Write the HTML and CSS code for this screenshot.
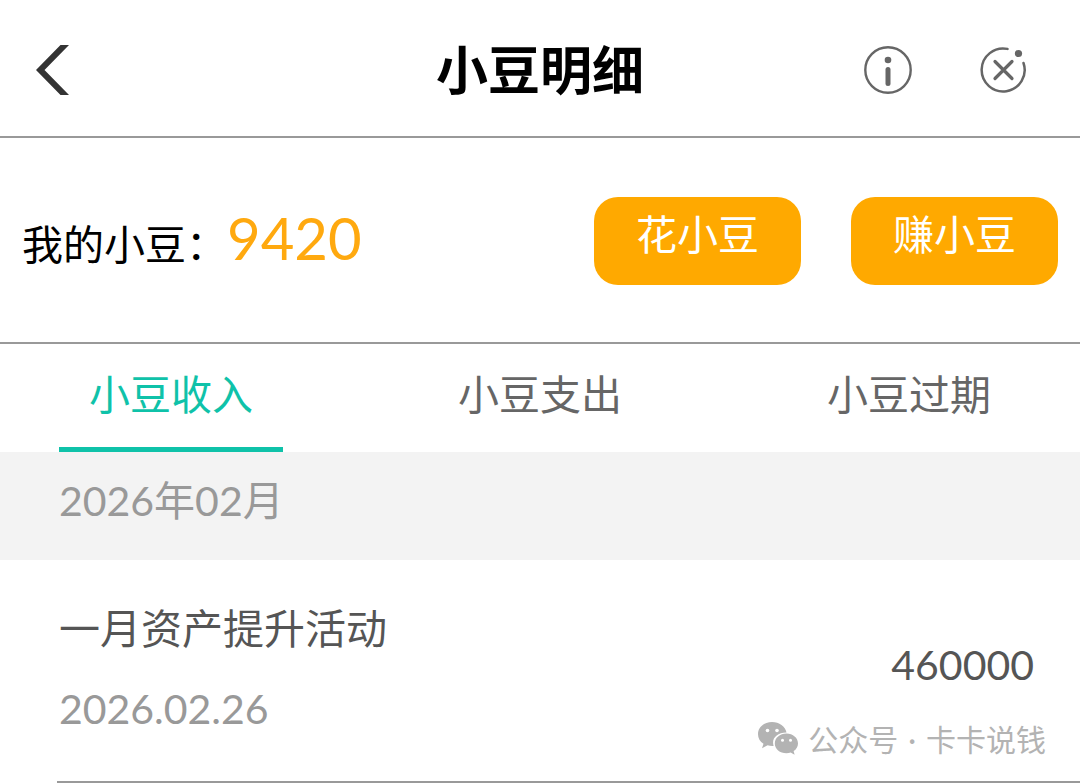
FILE: index.html
```
<!DOCTYPE html>
<html lang="zh-CN">

<head>
    <meta charset="UTF-8">
    <meta name="viewport" content="width=device-width, initial-scale=1.0">
    <title>小豆明细</title>
    <link rel="stylesheet" href="styles.css">
</head>

<body>
    <header class="header">
        <div class="left">
            <button class="icon" type="button" aria-label="返回">
                <svg width="34" height="50" viewBox="0 0 34 50">
                    <path d="M24.5 0H33L8.5 25 33 50H24.500L0 25z" fill="#333" />
                </svg>
            </button>
        </div>
        <h1>小豆明细</h1>
        <div class="right">
            <button class="icon" type="button" aria-label="说明">
                <svg width="48" height="48" viewBox="0 0 48 48" fill="none" stroke="#666">
                    <circle cx="24" cy="24" r="22.700" stroke-width="2.400" />
                    <circle cx="24" cy="14" r="3.300" fill="#666" stroke="none" />
                    <path d="M24 23.500v14" stroke-width="5" stroke-linecap="round" />
                </svg>
            </button>
            <button class="icon" type="button" aria-label="关闭">
                <svg width="48" height="48" viewBox="0 0 48 48" fill="none" stroke="#666" stroke-linecap="round">
                    <path d="M27.500 2.900A21.500 21.500 0 1 0 43.500 17" stroke-width="2.500" />
                    <path d="M15 15.500l17 17M32 15.500l-17 17" stroke-width="3.200" />
                    <circle cx="38.500" cy="7.500" r="3.600" fill="#666" stroke="none" />
                </svg>
            </button>
        </div>
    </header>

    <!-- 余额 -->
    <section class="balance">
        <p>我的小豆：<span class="num">9420</span></p>
        <div class="btns">
            <button type="button">花小豆</button>
            <button type="button">赚小豆</button>
        </div>
    </section>

    <nav class="tabs">
        <button class="active" type="button">小豆收入</button>
        <button type="button">小豆支出</button>
        <button type="button">小豆过期</button>
    </nav>

    <!-- 明细列表 -->
    <main>
        <h2 class="month">2026年02月</h2>
        <div class="record">
            <div class="info">
                <h3>一月资产提升活动</h3>
                <time datetime="2026-02-26">2026.02.26</time>
            </div>
            <span class="amount">460000</span>
            <div class="mark">
                <svg width="40" height="34" viewBox="0 0 40 34">
                    <path d="M14 0C6.200 0 0 5.300 0 12.200c0 4 2 7.300 5.500 9.600L4 26.200l5.600-2.900c1.700.5 3.600.7 6 .6C13.200 16.500 19 10.400 28.500 10.500 27.300 4.300 21.300 0 14 0z" fill="#b3b3b3" />
                    <path d="M28.500 11.500C21.900 11.500 16.800 15.900 16.800 21.400s5.100 9.800 11.700 9.800c1.500 0 2.900-.3 4.200-.7l3.900 2.300-1-3.700c2.700-1.900 4.400-4.500 4.400-7.700 0-5.500-5.100-9.900-11.500-9.900z" fill="#b3b3b3" />
                    <g fill="#fff">
                        <circle cx="9.500" cy="8.500" r="1.800" />
                        <circle cx="19" cy="8.500" r="1.800" />
                        <circle cx="24.500" cy="18.200" r="1.500" />
                        <circle cx="32.500" cy="18.200" r="1.500" />
                    </g>
                </svg>
                <span>公众号</span>
                <span>·</span>
                <span>卡卡说钱</span>
            </div>
        </div>
    </main>
</body>

</html>
```
FILE: styles.css
```
body {
    margin: 0;
    background-color: #fff;
    font-family: Lato, "Noto Sans CJK SC", sans-serif;
    font-size: 41px;
    line-height: 60px;
    color: #000;
}

h1,
h2,
h3,
p {
    margin: 0;
    font-size: inherit;
    font-weight: normal;
}

button {
    padding: 0;
    border: none;
    background: none;
    font: inherit;
    color: inherit;
    cursor: pointer;
}

svg {
    display: block;
}

.header {
    display: grid;
    grid-template-columns: 1fr auto 1fr;
    align-items: center;
    padding: 30px 36px 26px;
    border-bottom: 2px solid #999;
}

.header .left,
.header .right {
    display: flex;
}

.header .right {
    justify-content: flex-end;
    gap: 68px;
    padding-right: 16px;
}

.header h1 {
    font-size: 52px;
    font-weight: bold;
    line-height: 80px;
}

.balance {
    display: flex;
    justify-content: space-between;
    align-items: center;
    padding: 59px 22px 57px;
    border-bottom: 2px solid #999;
}

.balance .num {
    font-size: 58px;
    color: #ffa90f;
}

.balance .btns {
    display: flex;
    gap: 50px;
}

.balance button {
    width: 207px;
    padding: 8px 0 20px;
    border-radius: 24px;
    background-color: #ffa900;
    color: #fff;
}

.tabs {
    display: flex;
    justify-content: space-between;
    padding: 0 59px;
    color: #666;
}

.tabs button {
    width: 224px;
    padding: 21px 0 22px;
    border-bottom: 5px solid transparent;
}

.tabs .active {
    border-color: #0fc2a9;
    color: #0fc2a9;
}

.month {
    padding: 19px 59px 29px;
    background-color: #f3f3f3;
    color: #999;
}

.record {
    position: relative;
    display: flex;
    justify-content: space-between;
    align-items: center;
    margin-left: 57px;
    padding: 39px 46px 42px 2px;
    border-bottom: 2px solid #999;
    color: #555;
}

.record time {
    display: block;
    margin-top: 20px;
    color: #999;
}

.record .amount {
    padding-bottom: 8px;
}

.record .mark {
    position: absolute;
    right: 34px;
    bottom: 20px;
    display: flex;
    align-items: center;
    gap: 10px;
    font-size: 30px;
    line-height: 44px;
    color: #b3b3b3;
}
```
